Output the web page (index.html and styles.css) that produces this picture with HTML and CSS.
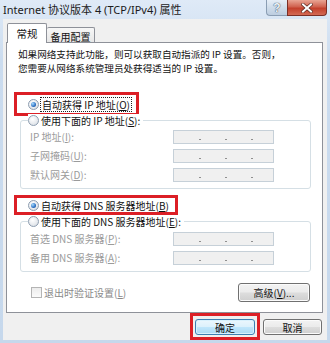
FILE: index.html
```html
<!DOCTYPE html>
<html>
<head>
<meta charset="utf-8">
<link rel="stylesheet" href="styles.css">
</head>
<body>
<div class="window">
  <div class="titlebar">
    <span class="title">Internet 协议版本 4 (TCP/IPv4) 属性</span>
    <div class="caption-btns">
      <span class="cbtn help">?</span>
      <span class="cbtn close"><svg width="12" height="10" viewBox="0 0 12 10"><path d="M2 1.5 L10 8.5 M10 1.5 L2 8.5" stroke="#5a2a22" stroke-width="3.4" stroke-linecap="square"/><path d="M2 1.5 L10 8.5 M10 1.5 L2 8.5" stroke="#fff" stroke-width="2" stroke-linecap="square"/></svg></span>
    </div>
  </div>
  <div class="client">
    <div class="tabs">
      <span class="tab active">常规</span>
      <span class="tab">备用配置</span>
    </div>
    <div class="panel">
      <p class="desc">如果网络支持此功能，则可以获取自动指派的 IP 设置。否则，<br>您需要从网络系统管理员处获得适当的 IP 设置。</p>
      <div class="mark mark-ip">
        <div class="opt"><span class="radio on"></span><span class="focus">自动获得 IP 地址(<u>O</u>)</span></div>
      </div>
      <div class="group">
        <div class="opt legend"><span class="radio"></span><span>使用下面的 IP 地址(<u>S</u>):</span></div>
        <div class="field"><span class="lbl">IP 地址(<u>I</u>):</span><span class="ipbox"><i></i><i></i><i></i></span></div>
        <div class="field"><span class="lbl">子网掩码(<u>U</u>):</span><span class="ipbox"><i></i><i></i><i></i></span></div>
        <div class="field"><span class="lbl">默认网关(<u>D</u>):</span><span class="ipbox"><i></i><i></i><i></i></span></div>
      </div>
      <div class="mark mark-dns">
        <div class="opt"><span class="radio on"></span><span>自动获得 DNS 服务器地址(<u>B</u>)</span></div>
      </div>
      <div class="group group-dns">
        <div class="opt legend"><span class="radio"></span><span>使用下面的 DNS 服务器地址(<u>E</u>):</span></div>
        <div class="field"><span class="lbl">首选 DNS 服务器(<u>P</u>):</span><span class="ipbox"><i></i><i></i><i></i></span></div>
        <div class="field"><span class="lbl">备用 DNS 服务器(<u>A</u>):</span><span class="ipbox"><i></i><i></i><i></i></span></div>
      </div>
      <div class="bottom-row">
        <div class="check"><span class="box"></span><span>退出时验证设置(<u>L</u>)</span></div>
        <span class="btn adv">高级(<u>V</u>)...</span>
      </div>
    </div>
    <div class="footer">
      <div class="mark mark-ok"><span class="btn default">确定</span></div>
      <span class="btn cancel">取消</span>
    </div>
  </div>
</div>
</body>
</html>
```

FILE: styles.css
```css
* { box-sizing: border-box; margin: 0; padding: 0; }
html, body { width: 330px; height: 343px; overflow: hidden; }
body {
  font-family: "Noto Sans CJK SC", "Noto Sans", sans-serif;
  font-size: 10px;
  color: #111;
  background: #cddef0;
}
u { text-decoration: underline; }

.window {
  width: 330px;
  height: 343px;
  padding: 0 3px 3px 3px;
  display: flex;
  flex-direction: column;
  background: linear-gradient(#dfeaf7, #cbdcef 60px, #c6d8ec);
}

.titlebar {
  height: 19px;
  flex: none;
  display: flex;
  align-items: flex-start;
}
.title {
  font-family: "Noto Sans", "Noto Sans CJK SC", sans-serif;
  font-size: 11px;
  line-height: 19px;
  color: #1b1b1b;
}
.caption-btns {
  margin-left: auto;
  display: flex;
}
.cbtn {
  height: 16px;
  display: flex;
  align-items: center;
  justify-content: center;
}
.help {
  width: 21px;
  border: 1px solid #8a9db3;
  border-top: none;
  border-right: none;
  border-radius: 0 0 0 4px;
  background: linear-gradient(#e6eef7, #cfdcea 50%, #bccde0);
  color: #eef2f7;
  font-family: "Liberation Sans", sans-serif;
  font-weight: bold;
  font-size: 12px;
  text-shadow: 0 0 1px #3c4f66, 0 0 1px #3c4f66;
}
.close {
  width: 40px;
  border: 1px solid #7c2f26;
  border-top: none;
  border-radius: 0 0 4px 0;
  background: linear-gradient(#e9a594, #d0624f 45%, #c3402c 55%, #d36a55);
}

.client {
  flex: 1;
  background: #f0f0f0;
  display: flex;
  flex-direction: column;
}

.tabs {
  height: 24px;
  flex: none;
  padding: 4px 0 0 4px;
  display: flex;
  align-items: flex-end;
}
.tab {
  height: 16px;
  width: 48px;
  border: 1px solid #8e9199;
  border-bottom: none;
  border-left: none;
  border-radius: 2px 2px 0 0;
  background: linear-gradient(#f7f7f7, #e6e6e6);
  display: flex;
  align-items: center;
  justify-content: center;
  font-size: 10px;
  padding-top: 1px;
}
.tab.active {
  height: 20px;
  width: 40px;
  border-left: 1px solid #8e9199;
  border-right: 1px solid #8e9199;
  background: #fff;
  position: relative;
  z-index: 1;
  font-size: 10.5px;
  padding-top: 0;
}

.panel {
  height: 271px;
  flex: none;
  margin: -1px 4px 0 3px;
  border: 1px solid #8e9199;
  background: #fff;
  display: flex;
  flex-direction: column;
  align-items: flex-start;
}

.desc {
  padding: 4px 0 0 11px;
  font-size: 9.6px;
  line-height: 14px;
  white-space: nowrap;
}

.mark {
  border: 3px solid #dc1f26;
}
.mark-ip {
  margin: 17px 0 0 7px;
  height: 24px;
  padding: 0 5px 0 11px;
  display: flex;
  align-items: center;
}
.mark-dns {
  margin: 6px 0 0 7px;
  height: 20px;
  padding: 0 6px 0 11px;
  display: flex;
  align-items: center;
}

.opt {
  display: flex;
  align-items: center;
  height: 13px;
  line-height: 13px;
  gap: 2px;
  white-space: nowrap;
}
.focus {
  outline: 1px dotted #222;
  outline-offset: 0;
  padding: 0 1px;
}

.radio {
  width: 11px;
  height: 11px;
  flex: none;
  border-radius: 50%;
  border: 1px solid #8d9db0;
  background: radial-gradient(circle at 40% 35%, #ffffff, #e8ebef 55%, #d0d6de);
  position: relative;
}
.radio.on::after {
  content: "";
  position: absolute;
  left: 2px;
  top: 2px;
  width: 5px;
  height: 5px;
  border-radius: 50%;
  background: radial-gradient(circle at 35% 35%, #a8dcff, #2d71c4 60%, #173f7a);
}

.group {
  width: 291px;
  margin: 4px 0 0 13px;
  border: 1px solid #d5dfe5;
  border-radius: 3px;
  padding: 0 0 4px 0;
}
.group-dns {
  margin-top: 6px;
}
.legend {
  margin: -7px 0 0 7px;
  width: fit-content;
  background: #fff;
  padding-right: 3px;
}
.group-dns .legend {
  margin-bottom: 1px;
}

.field {
  height: 19px;
  display: flex;
  align-items: center;
  padding-left: 9px;
}
.lbl {
  width: 143px;
  color: #9b9b9b;
  white-space: nowrap;
}
.ipbox {
  width: 101px;
  height: 14px;
  border: 1px solid #c6d0d8;
  background: #f0f0f0;
  display: flex;
  align-items: flex-end;
  padding: 0 0 3px 25px;
  gap: 24px;
}
.ipbox i {
  width: 2px;
  height: 1px;
  background: #8f8f8f;
}

.bottom-row {
  margin: 11px 0 0 24px;
  width: 279px;
  height: 19px;
  display: flex;
  align-items: center;
  justify-content: space-between;
}
.check {
  display: flex;
  align-items: center;
  gap: 2px;
  color: #8a8a8a;
}
.check .box {
  width: 11px;
  height: 11px;
  border: 1px solid #b4b4b4;
  background: linear-gradient(#ececec, #fafafa);
}

.btn {
  display: flex;
  align-items: center;
  justify-content: center;
  border: 1px solid #707070;
  border-radius: 3px;
  background: linear-gradient(#f3f3f3 0, #ebebeb 48%, #dddddd 52%, #cfcfcf 100%);
  box-shadow: inset 0 0 0 1px #fbfbfb;
  color: #111;
  font-size: 10px;
  white-space: nowrap;
}
.adv {
  width: 72px;
  height: 19px;
}

.footer {
  flex: 1;
  display: flex;
  justify-content: flex-end;
  align-items: flex-start;
  padding-right: 5px;
  gap: 3px;
}
.mark-ok {
  padding: 3px 2px 2px 2px;
}
.btn.default {
  width: 60px;
  height: 16px;
  border-color: #3c7fb1;
  background: linear-gradient(#ecf7fd 0, #dcf1fc 48%, #c0e6fb 52%, #a9daf5 100%);
  box-shadow: inset 0 0 0 1px #d8f1fd;
}
.cancel {
  width: 59px;
  height: 16px;
  margin-top: 6px;
}
```
